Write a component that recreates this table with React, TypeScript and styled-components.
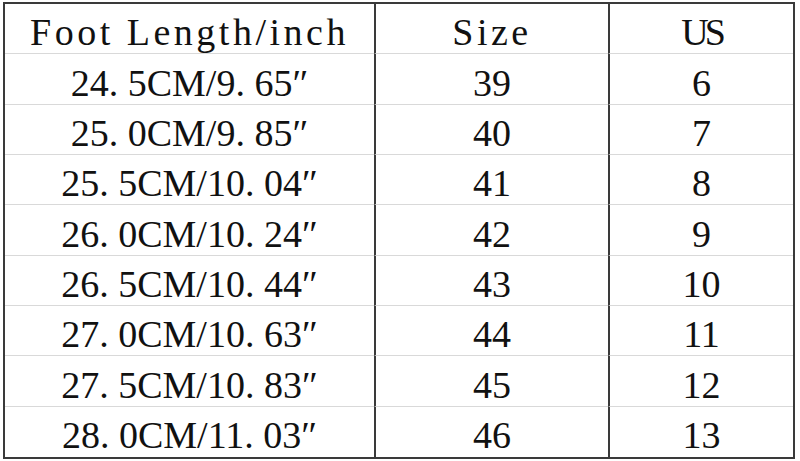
import React from "react";
import styled, { createGlobalStyle } from "styled-components";

const Global = createGlobalStyle`
  html, body { margin: 0; padding: 0; background: #ffffff; }
  body { width: 800px; height: 461px; overflow: hidden; }
`;

const Page = styled.div`
  width: 800px;
  height: 461px;
  padding: 2px 0 0 3px;
  box-sizing: border-box;
  background: #ffffff;
`;

const Table = styled.div`
  box-sizing: border-box;
  width: 792px;
  height: 457px;
  border: 2px solid #3a3a3a;
  display: grid;
  grid-template-columns: 369px 234px 1fr;
  grid-template-rows: repeat(9, 1fr);
`;

const Cell = styled.div<{ $col: number; $last: boolean; $spacing?: number }>`
  display: flex;
  align-items: center;
  justify-content: center;
  padding-top: 7px;
  box-sizing: border-box;
  border-left: ${(p) => (p.$col > 0 ? "2px solid #3a3a3a" : "none")};
  border-bottom: ${(p) => (p.$last ? "none" : "1px solid #d9d9d9")};
  font-family: "Liberation Serif", "DejaVu Serif", serif;
  font-size: 38px;
  color: #111111;
  letter-spacing: ${(p) => (p.$spacing ?? 0)}px;
  white-space: nowrap;
  overflow: hidden;
`;

const header = [
  { text: "Foot Length/inch", spacing: 3.5 },
  { text: "Size", spacing: 3.5 },
  { text: "US", spacing: -4 },
];

const rows: [string, string, string][] = [
  ["24. 5CM/9. 65″", "39", "6"],
  ["25. 0CM/9. 85″", "40", "7"],
  ["25. 5CM/10. 04″", "41", "8"],
  ["26. 0CM/10. 24″", "42", "9"],
  ["26. 5CM/10. 44″", "43", "10"],
  ["27. 0CM/10. 63″", "44", "11"],
  ["27. 5CM/10. 83″", "45", "12"],
  ["28. 0CM/11. 03″", "46", "13"],
];

export default function App() {
  return (
    <>
      <Global />
      <Page>
        <Table>
          {header.map((h, i) => (
            <Cell key={"h" + i} $col={i} $last={false} $spacing={h.spacing}>
              {h.text}
            </Cell>
          ))}
          {rows.map((r, ri) =>
            r.map((v, ci) => (
              <Cell key={ri + "-" + ci} $col={ci} $last={ri === rows.length - 1}>
                {v}
              </Cell>
            ))
          )}
        </Table>
      </Page>
    </>
  );
}
